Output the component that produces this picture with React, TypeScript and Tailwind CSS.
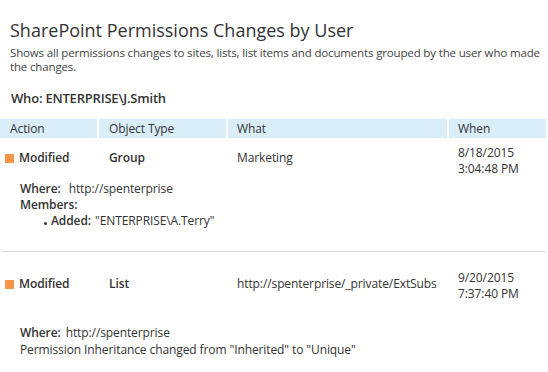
import React from "react";

const cols = "grid grid-cols-[97px_127px_219px_97px] gap-x-[2px]";

function Square() {
  return <span className="inline-block w-[9px] h-[9px] bg-[#f79646] shrink-0" />;
}

export default function App() {
  return (
    <div
      className="w-[548px] h-[372px] bg-white text-[#333333] overflow-hidden"
      style={{ fontFamily: '"Open Sans", "Noto Sans", sans-serif' }}
    >
      <div className="pt-[19px] pl-[10px] text-[18px] leading-[23px] tracking-[0px] text-[#333]">
        SharePoint Permissions Changes by User
      </div>
      <div className="mt-[4px] pl-[10px] pr-[2px] text-[11.5px] leading-[14px] tracking-[-0.15px] text-[#444]">
        Shows all permissions changes to sites, lists, list items and documents grouped by the user who made the changes.
      </div>
      <div className="mt-[15px] pl-[11px] text-[13px] leading-[18px] font-semibold tracking-[-0.2px] text-[#333]">
        Who: ENTERPRISE\J.Smith
      </div>

      <div className={`${cols} mt-[12px] h-[19px] text-[12px] leading-[19px] tracking-[-0.1px]`}>
        <div className="bg-[#daeef9] pl-[10px]">Action</div>
        <div className="bg-[#daeef9] pl-[10px]">Object Type</div>
        <div className="bg-[#daeef9] pl-[9px]">What</div>
        <div className="bg-[#daeef9] pl-[9px]">When</div>
      </div>

      {/* Row 1 */}
      <div className={`${cols} mt-[7px] text-[12px] leading-[16px] tracking-[-0.1px]`}>
        <div className="pl-[5px] pt-[5px] flex items-center gap-[5px] self-start">
          <Square />
          <span className="font-semibold">Modified</span>
        </div>
        <div className="pl-[10px] pt-[5px] font-semibold">Group</div>
        <div className="pl-[9px] pt-[5px]">Marketing</div>
        <div className="pl-[9px]">
          <div>8/18/2015</div>
          <div>3:04:48 PM</div>
        </div>
      </div>
      <div className="mt-[4px] pl-[20px] text-[12px] leading-[16px] tracking-[-0.1px]">
        <div className="flex">
          <span className="font-semibold">Where:</span>
          <span className="ml-[8px]">http://spenterprise</span>
        </div>
        <div className="font-semibold">Members:</div>
        <div className="pl-[24px] flex items-center">
          <span className="w-[3px] h-[3px] rounded-full bg-[#333] mr-[4px] mt-[4px]" />
          <span className="font-semibold">Added:</span>
          <span className="ml-[4px]">"ENTERPRISE\A.Terry"</span>
        </div>
      </div>

      <div className="mt-[22px] ml-[2px] w-[544px] h-px bg-[#d9d9d9]" />

      {/* Row 2 */}
      <div className={`${cols} mt-[18px] text-[12px] leading-[16px] tracking-[-0.1px]`}>
        <div className="pl-[5px] pt-[6px] flex items-center gap-[5px] self-start">
          <Square />
          <span className="font-semibold">Modified</span>
        </div>
        <div className="pl-[10px] pt-[6px] font-semibold">List</div>
        <div className="pl-[9px] pt-[6px]">http://spenterprise/_private/ExtSubs</div>
        <div className="pl-[9px]">
          <div>9/20/2015</div>
          <div>7:37:40 PM</div>
        </div>
      </div>
      <div className="mt-[22px] pl-[20px] text-[12px] leading-[17px] tracking-[-0.1px]">
        <div className="flex">
          <span className="font-semibold">Where:</span>
          <span className="ml-[5px]">http://spenterprise</span>
        </div>
        <div>Permission Inheritance changed from "Inherited" to "Unique"</div>
      </div>
    </div>
  );
}
